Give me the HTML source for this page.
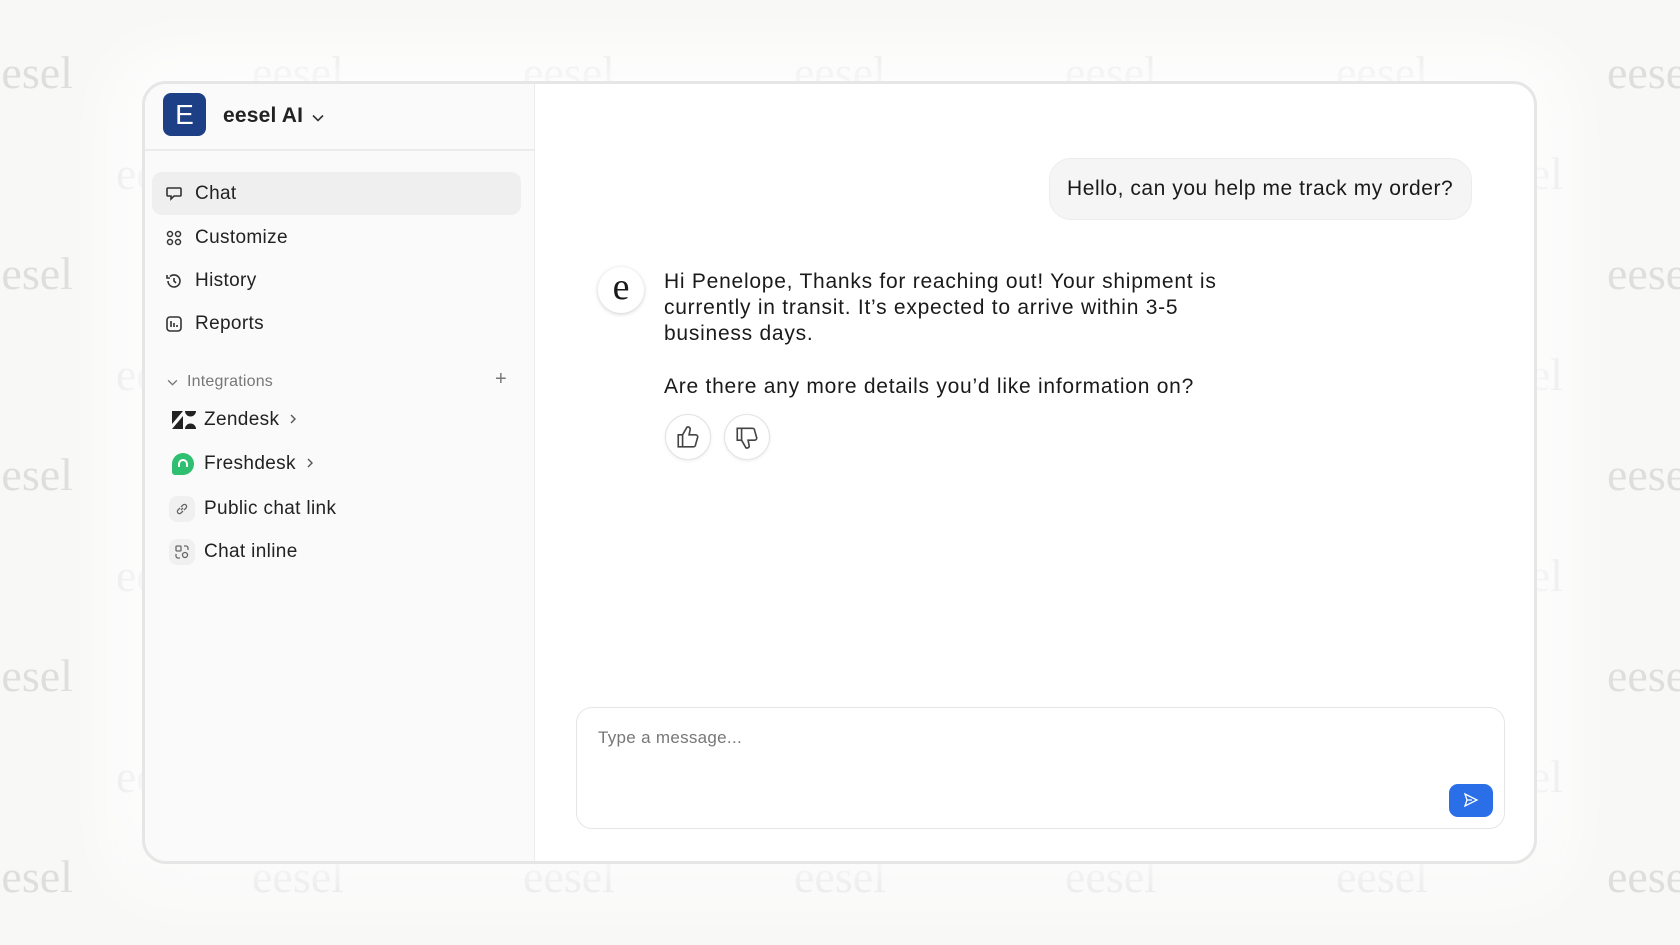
<!DOCTYPE html>
<html><head><meta charset="utf-8"><style>
*{box-sizing:border-box;margin:0;padding:0}
html,body{width:1680px;height:945px;overflow:hidden}
body{background:#f8f8f7;font-family:"Liberation Sans",sans-serif;position:relative;color:#1a1a1a}
#wm{position:absolute;left:0;top:0;width:1680px;height:945px;overflow:hidden}
.wm{position:absolute;font-family:"Liberation Serif",serif;font-size:46px;color:#dedede;line-height:1}
.card{position:absolute;left:142px;top:81px;width:1395px;height:783px;background:#fff;border:3px solid #e6e6e6;border-radius:24px;overflow:hidden;box-shadow:0 0 60px 30px rgba(255,255,255,.9),0 10px 40px rgba(0,0,0,.06)}
.side{position:absolute;left:0;top:0;width:390px;height:100%;background:#fafafa;border-right:1px solid #ececec}
.hdr{height:67px;border-bottom:2px solid #ececec;position:relative}
.logo{position:absolute;left:18px;top:9px;width:43px;height:43px;background:#1d3f85;border-radius:8px;color:#fff;font-size:28px;text-align:center;line-height:43px}
.brand{position:absolute;left:78px;top:20px;font-size:21px;font-weight:bold;color:#222;letter-spacing:.2px}
.nav{position:absolute;left:7px;height:43px;width:369px;border-radius:10px;font-size:19px;line-height:43px;padding-left:43px;color:#222;letter-spacing:.35px}
.nav svg{position:absolute;left:13px;top:13px}
.sel{background:#efefef}
.int{position:absolute;left:0;font-size:19px;color:#222;line-height:30px;letter-spacing:.35px}
.ic{position:absolute;width:26px;height:26px;border-radius:8px}
.msg{position:absolute;font-size:21px;line-height:26px;color:#1a1a1a;letter-spacing:.75px}
</style></head><body>
<div id="wm"></div>
<script>
var s='';for(var r=0;r<9;r++){var y=50+r*100.5;var off=(r%2)?116:-19;for(var c=0;c<7;c++){var x=off+c*271;if(x>1680)continue;s+='<div class="wm" style="left:'+x+'px;top:'+y+'px">eesel</div>';}}document.getElementById('wm').innerHTML=s;
</script>
<div class="card">
 <div class="side">
  <div class="hdr"><div class="logo">E</div><div class="brand">eesel AI <svg width="12" height="8" viewBox="0 0 12 8" style="margin-left:3px" fill="none" stroke="#333" stroke-width="1.6"><path d="M1 1.5l5 5 5-5"/></svg></div></div>
  <div class="nav sel" style="top:88px"><svg width="18" height="18" viewBox="0 0 18 18" fill="none" stroke="#333" stroke-width="1.6"><path d="M3 3h12a1 1 0 0 1 1 1v6a1 1 0 0 1-1 1H9l-3 3v-3H3a1 1 0 0 1-1-1V4a1 1 0 0 1 1-1z"/></svg>Chat</div>
  <div class="nav" style="top:132px"><svg width="18" height="18" viewBox="0 0 18 18" fill="none" stroke="#333" stroke-width="1.5"><circle cx="5" cy="5" r="2.5"/><circle cx="13" cy="5" r="2.5"/><circle cx="5" cy="13" r="2.5"/><circle cx="13" cy="13" r="2.5"/></svg>Customize</div>
  <div class="nav" style="top:175px"><svg width="18" height="18" viewBox="0 0 18 18" fill="none" stroke="#333" stroke-width="1.6"><path d="M3 9a6 6 0 1 0 2-4.5"/><path d="M2 3v3h3"/><path d="M9 6v3l2 2"/></svg>History</div>
  <div class="nav" style="top:218px"><svg width="18" height="18" viewBox="0 0 18 18" fill="none" stroke="#333" stroke-width="1.6"><rect x="2" y="2" width="14" height="14" rx="3"/><path d="M6 6v6M9 8v4M12 10v2"/></svg>Reports</div>
  <div style="position:absolute;left:22px;top:289px;font-size:16px;color:#777;letter-spacing:.2px"><svg width="11" height="7" viewBox="0 0 12 8" style="margin-right:9px" fill="none" stroke="#777" stroke-width="1.6"><path d="M1 1.5l5 5 5-5"/></svg>Integrations</div>
  <div style="position:absolute;left:350px;top:284px;font-size:20px;color:#777">+</div>
  <div class="int" style="top:321px;left:27px"><svg width="24" height="18" viewBox="0 0 24 18" style="position:absolute;left:0;top:6px"><path d="M0 0h11L0 13z" fill="#222"/><path d="M13 0a5.5 5.5 0 0 0 11 0z" fill="#222"/><path d="M0 18L11 5v13z" fill="#222"/><path d="M13 18a5.5 5.5 0 0 1 11 0z" fill="#222"/></svg><span style="margin-left:32px">Zendesk</span> <svg width="8" height="12" viewBox="0 0 8 12" fill="none" stroke="#555" stroke-width="1.4" style="margin-left:4px"><path d="M2 2l4 4-4 4"/></svg></div>
  <div class="int" style="top:365px;left:27px"><div class="ic" style="left:0;top:4px;width:22px;height:22px;background:#2fbf71;border-radius:11px 11px 11px 3px"></div><svg width="12" height="12" viewBox="0 0 12 12" style="position:absolute;left:5px;top:9px" fill="none" stroke="#fff" stroke-width="2"><path d="M2 9V6a4 4 0 0 1 8 0v3"/></svg><span style="margin-left:32px">Freshdesk</span> <svg width="8" height="12" viewBox="0 0 8 12" fill="none" stroke="#555" stroke-width="1.4" style="margin-left:4px"><path d="M2 2l4 4-4 4"/></svg></div>
  <div class="int" style="top:410px;left:27px"><div class="ic" style="left:-3px;top:2px;background:#f0f0f0"></div><svg width="14" height="14" viewBox="0 0 14 14" style="position:absolute;left:3px;top:8px" fill="none" stroke="#666" stroke-width="1.3"><path d="M6 8l2-2M5 6L3 8a2 2 0 0 0 3 3l2-2M9 8l2-2a2 2 0 0 0-3-3L6 5"/></svg><span style="margin-left:32px">Public chat link</span></div>
  <div class="int" style="top:453px;left:27px"><div class="ic" style="left:-3px;top:2px;background:#f0f0f0"></div><svg width="14" height="14" viewBox="0 0 14 14" style="position:absolute;left:3px;top:8px" fill="none" stroke="#666" stroke-width="1.3"><rect x="1" y="1" width="5" height="5" rx="1"/><circle cx="10" cy="10" r="2.5"/><path d="M1 9v2a2 2 0 0 0 2 2h2M9 1h2a2 2 0 0 1 2 2v2"/></svg><span style="margin-left:32px">Chat inline</span></div>
 </div>
 <div style="position:absolute;left:904px;top:74px;width:423px;height:62px;background:#f5f5f5;border:1px solid #ececec;border-radius:22px;font-size:21px;line-height:60px;padding-left:17px;color:#1a1a1a;letter-spacing:.55px;white-space:nowrap">Hello, can you help me track my order?</div>
 <div style="position:absolute;left:453px;top:183px;width:46px;height:46px;border-radius:50%;background:#fff;box-shadow:0 1px 4px rgba(0,0,0,.2);font-family:'Liberation Serif',serif;font-size:38px;text-align:center;line-height:40px">e</div>
 <div class="msg" style="left:519px;top:185px;width:580px">Hi Penelope, Thanks for reaching out! Your shipment is currently in transit. It’s expected to arrive within 3-5 business days.</div>
 <div class="msg" style="left:519px;top:290px">Are there any more details you’d like information on?</div>
 <div style="position:absolute;left:520px;top:330px;width:46px;height:46px;border-radius:50%;border:1px solid #e3e3e3;box-shadow:0 1px 3px rgba(0,0,0,.08)"><svg width="26" height="26" viewBox="0 0 24 24" style="margin:9px" fill="none" stroke="#444" stroke-width="1.5"><path d="M3 10h4v11H3zM7 10l4-7a2 2 0 0 1 3 2l-1 5h6a2 2 0 0 1 2 2l-2 7a2 2 0 0 1-2 2H7"/></svg></div>
 <div style="position:absolute;left:579px;top:330px;width:46px;height:46px;border-radius:50%;border:1px solid #e3e3e3;box-shadow:0 1px 3px rgba(0,0,0,.08)"><svg width="26" height="26" viewBox="0 0 24 24" style="margin:10px 9px" fill="none" stroke="#444" stroke-width="1.5"><path d="M3 3h4v11H3zM7 14l4 7a2 2 0 0 0 3-2l-1-5h6a2 2 0 0 0 2-2l-2-7a2 2 0 0 0-2-2H7"/></svg></div>
 <div style="position:absolute;left:431px;top:623px;width:929px;height:122px;border:1.5px solid #e6e6e6;border-radius:16px">
  <div style="position:absolute;left:21px;top:20px;font-size:17px;color:#777;letter-spacing:.3px">Type a message...</div>
  <div style="position:absolute;left:872px;top:76px;width:44px;height:33px;background:#2a6fe8;border-radius:9px"><svg width="16" height="16" viewBox="0 0 16 16" style="margin:8px 14px" fill="none" stroke="#fff" stroke-width="1.3"><path d="M2 2l12 6-12 6 2-6zM4 8h5"/></svg></div>
 </div>
</div>
</body></html>
